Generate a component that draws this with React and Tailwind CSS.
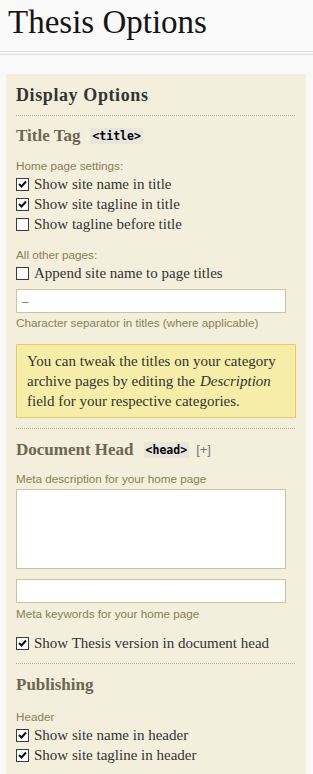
import React from "react";

const serif = { fontFamily: '"Liberation Serif", "DejaVu Serif", serif' };

function Check({ checked }) {
  return (
    <span className="inline-flex h-[13px] w-[13px] shrink-0 items-center justify-center border border-[#3a3a3a] bg-white">
      {checked && (
        <svg width="9" height="9" viewBox="0 0 9 9">
          <path d="M1 4 L3.5 6.5 L8 1.5" fill="none" stroke="#111" strokeWidth="2" />
        </svg>
      )}
    </span>
  );
}

function Row({ checked, children }) {
  return (
    <div className="flex h-[20px] items-center gap-[5px] text-[15px] text-[#333]">
      <Check checked={checked} />
      <span className="leading-[20px]">{children}</span>
    </div>
  );
}

function Label({ children, className = "" }) {
  return (
    <div className={"text-[11.7px] leading-[14px] text-[#8a8054] font-['Liberation_Sans',Arial,sans-serif] " + className}>
      {children}
    </div>
  );
}

function Code({ children }) {
  return (
    <span className="ml-[10px] inline-block bg-[#e8e6dc] px-[2px] text-[11.5px] font-bold leading-[16px] text-black font-['DejaVu_Sans_Mono',monospace]">
      {children}
    </span>
  );
}

function Dotted() {
  return <div className="mr-[1px] border-t border-dotted border-[#b8ae8c]" />;
}

export default function App() {
  return (
    <div className="min-h-[774px] w-[313px] overflow-hidden bg-[#f9f9f9]" style={serif}>
      <h1 className="pl-[8px] pt-[3px] text-[33px] leading-[38px] text-[#151515]">Thesis Options</h1>
      <div className="mt-[10px] h-[4px] border-y border-[#dcdcdc]" />
      <div className="ml-[6px] mt-[19px] w-[300px] bg-[#f3efdc] pl-[10px] pr-[10px] pb-[20px]">
        <h2 className="pt-[10px] text-[18px] font-bold leading-[22px] tracking-[0.6px] text-[#333]">Display Options</h2>
        <div className="mt-[9px]">
          <Dotted />
        </div>
        <div className="mt-[10px] flex items-center text-[17px] font-bold leading-[20px] text-[#6d6650]">
          Title Tag <Code>&lt;title&gt;</Code>
        </div>
        <Label className="mt-[13px]">Home page settings:</Label>
        <div className="mt-[1px]">
          <Row checked>Show site name in title</Row>
          <Row checked>Show site tagline in title</Row>
          <Row>Show tagline before title</Row>
        </div>
        <Label className="mt-[14px]">All other pages:</Label>
        <div className="mt-[1px]">
          <Row>Append site name to page titles</Row>
        </div>
        <div className="mt-[6px] flex h-[24px] w-[270px] items-center border border-[#cbc3a0] bg-white pl-[5px] text-[13px] text-[#555]">
          –
        </div>
        <Label className="mt-[3px]">Character separator in titles (where applicable)</Label>
        <div className="mt-[14px] border border-[#e3cd63] bg-[#f6eea8] px-[10px] py-[6px] text-[15px] leading-[20px] text-[#333]">
          You can tweak the titles on your category archive pages by editing the <i className="px-[1px]">Description</i> field for your respective categories.
        </div>
        <div className="mt-[10px]">
          <Dotted />
        </div>
        <div className="mt-[11px] flex items-center text-[17px] font-bold leading-[20px] text-[#6d6650]">
          Document Head <Code>&lt;head&gt;</Code>
          <span className="ml-[7px] text-[13px] font-normal text-[#777] font-['Liberation_Sans',Arial,sans-serif]">[+]</span>
        </div>
        <Label className="mt-[12px]">Meta description for your home page</Label>
        <div className="mt-[3px] h-[80px] w-[270px] border border-[#cbc3a0] bg-white" />
        <div className="mt-[10px] h-[24px] w-[270px] border border-[#cbc3a0] bg-white" />
        <Label className="mt-[4px]">Meta keywords for your home page</Label>
        <div className="mt-[12px]">
          <Row checked>Show Thesis version in document head</Row>
        </div>
        <div className="mt-[10px]">
          <Dotted />
        </div>
        <div className="mt-[11px] text-[17px] font-bold leading-[20px] text-[#6d6650]">Publishing</div>
        <Label className="mt-[15px]">Header</Label>
        <div className="mt-[1px]">
          <Row checked>Show site name in header</Row>
          <Row checked>Show site tagline in header</Row>
        </div>
      </div>
    </div>
  );
}
